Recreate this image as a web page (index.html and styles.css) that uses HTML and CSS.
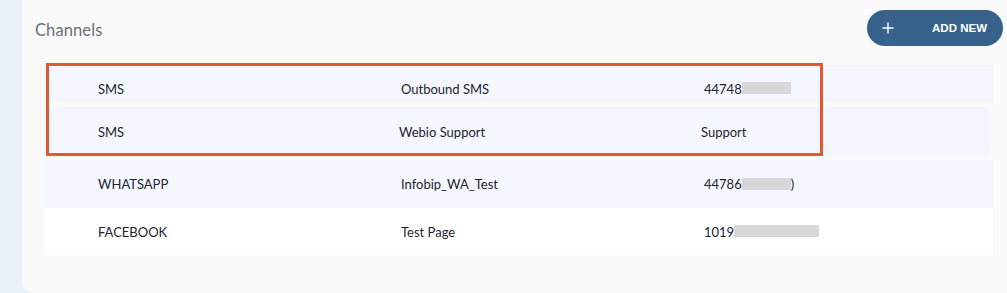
FILE: index.html
```html
<!DOCTYPE html>
<html lang="en">
<head>
<meta charset="utf-8">
<title>Channels</title>
<link rel="stylesheet" href="styles.css">
</head>
<body>
<div class="app">
  <aside class="side"></aside>
  <main class="panel">
    <header class="head">
      <h1 class="title">Channels</h1>
      <button class="add-btn" type="button">
        <svg class="plus" width="12" height="12" viewBox="0 0 12 12" aria-hidden="true"><path d="M6 0.5V11.5M0.5 6H11.5" stroke="#fff" stroke-width="1.4" fill="none"/></svg>
        <span class="add-label">ADD NEW</span>
      </button>
    </header>
    <section class="table">
      <div class="row row-a">
        <span class="cell">SMS</span>
        <span class="cell">Outbound SMS</span>
        <span class="cell">44748<span class="redact" style="width:49px"></span></span>
      </div>
      <div class="row row-b">
        <span class="cell">SMS</span>
        <span class="cell">Webio Support</span>
        <span class="cell">Support</span>
      </div>
      <div class="row row-c">
        <span class="cell">WHATSAPP</span>
        <span class="cell">Infobip_WA_Test</span>
        <span class="cell">44786<span class="redact" style="width:49px"></span>)</span>
      </div>
      <div class="row row-d">
        <span class="cell">FACEBOOK</span>
        <span class="cell">Test Page</span>
        <span class="cell">1019<span class="redact" style="width:85px"></span></span>
      </div>
      <div class="highlight"></div>
    </section>
  </main>
</div>
</body>
</html>
```

FILE: styles.css
```css
* { box-sizing: border-box; }
html, body { margin: 0; padding: 0; }
body {
  width: 1007px;
  height: 293px;
  overflow: hidden;
  background: #e9f1f9;
  font-family: Lato, "Noto Sans", "DejaVu Sans", sans-serif;
  color: #1d2330;
}
.app {
  display: flex;
  height: 293px;
}
.side {
  width: 22px;
  flex: none;
  background: #e9f1f9;
}
.panel {
  flex: 1;
  background: #fafafb;
  border-bottom-left-radius: 12px;
  padding: 10px 4px 0 13px;
  position: relative;
}
.head {
  display: flex;
  align-items: center;
  justify-content: space-between;
  height: 36px;
}
.title {
  margin: 4px 0 0;
  font-size: 16.5px;
  font-weight: 400;
  color: #6c7078;
  letter-spacing: 0.1px;
}
.add-btn {
  width: 136px;
  height: 36px;
  border: none;
  border-radius: 18px;
  background: #35618b;
  color: #fff;
  display: flex;
  align-items: center;
  padding: 0 16px 0 15px;
  cursor: pointer;
}
.plus { flex: none; }
.add-label {
  margin-left: auto;
  font-family: "Liberation Sans", Arial, sans-serif;
  font-weight: 700;
  font-size: 11.5px;
  letter-spacing: 0;
}
.table {
  position: relative;
  margin: 19px 0 0 9px;
  width: 949px;
}
.row {
  display: grid;
  grid-template-columns: 303px 303px 1fr;
  align-items: center;
  padding-left: 54px;
  font-size: 13px;
  background: #f4f8fe;
}
.row-a {
  height: 37px;
  padding-top: 10px;
  margin-bottom: 5px;
}
.row-b {
  height: 49px;
  width: 946px;
  margin-bottom: 4px;
  grid-template-columns: 301px 302px 1fr;
}
.row-c { height: 48px; }
.row-d { height: 47px; background: #ffffff; }
.cell {
  display: flex;
  align-items: center;
  white-space: nowrap;
}
.redact {
  display: inline-block;
  height: 12px;
  background: #d8d8d8;
  margin-top: -1px;
}
.highlight {
  position: absolute;
  left: 2px;
  top: -2px;
  width: 777px;
  height: 93px;
  border: 3px solid #e4572f;
  pointer-events: none;
}
```
